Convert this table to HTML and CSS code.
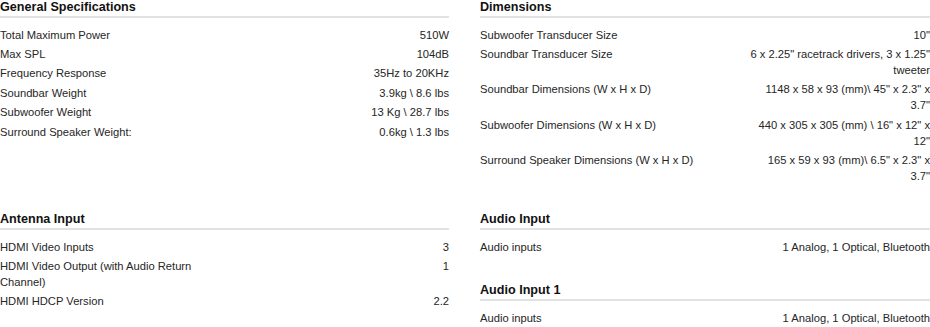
FILE: index.html
```html
<!DOCTYPE html>
<html>
<head>
<meta charset="utf-8">
<link rel="stylesheet" href="styles.css">
</head>
<body>
<div class="specs">
  <section class="group">
    <h3 class="group-title">General Specifications</h3>
    <div class="rows">
      <div class="row"><span class="label">Total Maximum Power</span><span class="value">510W</span></div>
      <div class="row"><span class="label">Max SPL</span><span class="value">104dB</span></div>
      <div class="row"><span class="label">Frequency Response</span><span class="value">35Hz to 20KHz</span></div>
      <div class="row"><span class="label">Soundbar Weight</span><span class="value">3.9kg \ 8.6 lbs</span></div>
      <div class="row"><span class="label">Subwoofer Weight</span><span class="value">13 Kg \ 28.7 lbs</span></div>
      <div class="row"><span class="label">Surround Speaker Weight:</span><span class="value">0.6kg \ 1.3 lbs</span></div>
    </div>
  </section>
  <section class="group">
    <h3 class="group-title">Dimensions</h3>
    <div class="rows">
      <div class="row"><span class="label">Subwoofer Transducer Size</span><span class="value">10"</span></div>
      <div class="row"><span class="label">Soundbar Transducer Size</span><span class="value">6 x 2.25" racetrack drivers, 3 x 1.25" tweeter</span></div>
      <div class="row"><span class="label">Soundbar Dimensions (W x H x D)</span><span class="value">1148 x 58 x 93 (mm)\ 45" x 2.3" x 3.7"</span></div>
      <div class="row"><span class="label">Subwoofer Dimensions (W x H x D)</span><span class="value">440 x 305 x 305 (mm) \ 16" x 12" x 12"</span></div>
      <div class="row"><span class="label">Surround Speaker Dimensions (W x H x D)</span><span class="value">165 x 59 x 93 (mm)\ 6.5" x 2.3" x 3.7"</span></div>
    </div>
  </section>
  <section class="group">
    <h3 class="group-title">Antenna Input</h3>
    <div class="rows">
      <div class="row"><span class="label">HDMI Video Inputs</span><span class="value">3</span></div>
      <div class="row"><span class="label">HDMI Video Output (with Audio Return Channel)</span><span class="value">1</span></div>
      <div class="row"><span class="label">HDMI HDCP Version</span><span class="value">2.2</span></div>
    </div>
  </section>
  <div class="stack">
    <section class="group">
      <h3 class="group-title">Audio Input</h3>
      <div class="rows">
        <div class="row"><span class="label">Audio inputs</span><span class="value">1 Analog, 1 Optical, Bluetooth</span></div>
      </div>
    </section>
    <section class="group">
      <h3 class="group-title">Audio Input 1</h3>
      <div class="rows">
        <div class="row"><span class="label">Audio inputs</span><span class="value">1 Analog, 1 Optical, Bluetooth</span></div>
      </div>
    </section>
  </div>
</div>
</body>
</html>
```
FILE: styles.css
```css
html, body {
  margin: 0;
  padding: 0;
  background: #fff;
}
body {
  font-family: "Liberation Sans", Arial, sans-serif;
  color: #262626;
  width: 930px;
}
.specs {
  display: grid;
  grid-template-columns: 449px 1fr;
  column-gap: 31px;
  row-gap: 26px;
  align-items: start;
}
.stack {
  display: flex;
  flex-direction: column;
  gap: 27px;
}
.group-title {
  margin: 0;
  font-size: 12.6px;
  font-weight: bold;
  line-height: 14px;
  color: #111;
  padding-bottom: 2px;
  border-bottom: 2px solid #e2e2e2;
}
.rows {
  margin-top: 7px;
}
.row {
  display: flex;
  justify-content: space-between;
  align-items: flex-start;
  font-size: 11.2px;
  line-height: 16px;
  padding: 1.7px 0;
}
.label {
  width: 225px;
}
.value {
  width: 183px;
  text-align: right;
}
```
